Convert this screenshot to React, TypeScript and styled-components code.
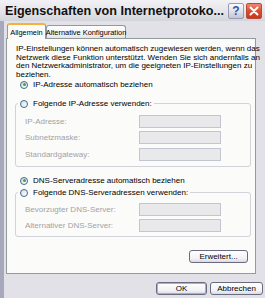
import styled, { createGlobalStyle } from "styled-components";

const GlobalStyle = createGlobalStyle`
  html, body {
    margin: 0;
    padding: 0;
    background: #e2e1e7;
  }
  body {
    width: 265px;
    height: 298px;
    overflow: hidden;
    font-family: "Liberation Sans", Arial, sans-serif;
  }
`;

const Window = styled.div`
  width: 265px;
  height: 298px;
  display: flex;
  flex-direction: column;
  background: #e2e1e7;
`;

const TitleBar = styled.div`
  height: 21px;
  flex: none;
  display: flex;
  align-items: center;
  padding: 0 3px 0 5px;
  background: linear-gradient(#f2f2f6, #e2e2e8 60%, #d4d4dc);
`;

const Title = styled.div`
  flex: 1;
  font-size: 12.6px;
  font-weight: 700;
  color: #111;
  white-space: nowrap;
`;

const CaptionButton = styled.div<{ $close?: boolean }>`
  width: 16px;
  height: 16px;
  margin-left: 2px;
  box-sizing: border-box;
  border-radius: 2px;
  display: flex;
  align-items: center;
  justify-content: center;
  border: 1px solid ${(p) => (p.$close ? "#b84a3a" : "#9a9ab2")};
  background: ${(p) =>
    p.$close
      ? "linear-gradient(#f08a70, #dc4c30 50%, #c8381e)"
      : "linear-gradient(#fafafc, #dcdce6 60%, #c4c4d4)"};
  color: #2d56a8;
  font-size: 12px;
  font-weight: 700;
`;

const Frame = styled.div`
  flex: 1;
  display: flex;
  flex-direction: column;
  border-left: 4px solid #a8a8bc;
  padding: 1px 0 0 2px;
`;

const TabStrip = styled.div`
  height: 16px;
  display: flex;
  align-items: flex-end;
  padding-left: 1px;
`;

const Tab = styled.div<{ $active?: boolean }>`
  position: relative;
  z-index: 1;
  box-sizing: border-box;
  display: flex;
  align-items: center;
  justify-content: center;
  white-space: nowrap;
  font-size: 7.4px;
  color: #000;
  border: 1px solid #919b9c;
  border-bottom: none;
  border-radius: 3px 3px 0 0;
  width: ${(p) => (p.$active ? "39px" : "80px")};
  height: ${(p) => (p.$active ? "16px" : "13px")};
  margin-bottom: ${(p) => (p.$active ? "-1px" : "0")};
  border-top: ${(p) => (p.$active ? "2px solid #f4b23c" : "1px solid #919b9c")};
  background: ${(p) =>
    p.$active ? "#fbfbf9" : "linear-gradient(#ffffff, #f0f0f2 70%, #e4e4e8)"};
`;

const Panel = styled.div`
  height: 236px;
  margin-right: 9px;
  box-sizing: border-box;
  border: 1px solid #919b9c;
  background: #fbfbf9;
  padding: 0 4px 0 8px;
  display: flex;
  flex-direction: column;
`;

const Intro = styled.p`
  margin: 6px 0 0 1px;
  font-size: 8px;
  line-height: 8.7px;
  color: #000;
  white-space: nowrap;
`;

const RadioRow = styled.label<{ $top?: number }>`
  display: flex;
  align-items: center;
  gap: 5px;
  height: 10px;
  margin-top: ${(p) => p.$top ?? 0}px;
  margin-left: 5px;
  font-size: 8px;
  color: #000;
  white-space: nowrap;
`;

const Radio = styled.span<{ $checked?: boolean }>`
  width: 8px;
  height: 8px;
  box-sizing: border-box;
  border-radius: 50%;
  border: 1px solid #3a6a9a;
  background: linear-gradient(135deg, #dcdcd8, #ffffff);
  display: flex;
  align-items: center;
  justify-content: center;
  &::after {
    content: "";
    width: 3px;
    height: 3px;
    border-radius: 50%;
    background: ${(p) => (p.$checked ? "#3aa83a" : "transparent")};
  }
`;

const Group = styled.fieldset<{ $top: number }>`
  margin: ${(p) => p.$top}px 0 0 0;
  padding: 0;
  border: 1px solid #d2d2da;
  border-radius: 3px;
  min-inline-size: 0;
`;

const Legend = styled.legend`
  margin-left: 2px;
  padding: 0 2px;
  height: 10px;
`;

const LegendRow = styled.span`
  display: flex;
  align-items: center;
  gap: 5px;
  height: 10px;
  font-size: 8px;
  color: #000;
  white-space: nowrap;
`;

const Fields = styled.div<{ $pt: number; $pb: number }>`
  display: flex;
  flex-direction: column;
  gap: 3.5px;
  padding: ${(p) => p.$pt}px 0 ${(p) => p.$pb}px 9px;
`;

const FieldRow = styled.div`
  display: flex;
  align-items: center;
  height: 13px;
`;

const FieldLabel = styled.span`
  width: 114px;
  font-size: 8px;
  color: #a2a2a6;
  white-space: nowrap;
`;

const Input = styled.div`
  width: 82px;
  height: 13px;
  box-sizing: border-box;
  border: 1px solid #c2c6d2;
  background: #e9e9ec;
`;

const Button = styled.div<{ $w: number; $default?: boolean }>`
  width: ${(p) => p.$w}px;
  height: 13px;
  box-sizing: border-box;
  display: flex;
  align-items: center;
  justify-content: center;
  font-size: 8px;
  color: #000;
  border: 1px solid #6a6a80;
  border-radius: 3px;
  background: linear-gradient(#ffffff, #f2f2f4 70%, #d8d8e0);
  box-shadow: ${(p) => (p.$default ? "inset 0 0 0 1px #9ab4e0" : "none")};
`;

const AdvancedButton = styled(Button)`
  align-self: flex-end;
  margin-top: 13px;
  margin-right: 3px;
`;

const Footer = styled.div`
  display: flex;
  justify-content: flex-end;
  gap: 3px;
  padding-top: 8px;
  margin-right: 2px;
`;

export default function App() {
  return (
    <>
      <GlobalStyle />
      <Window>
        <TitleBar>
          <Title>Eigenschaften von Internetprotoko...</Title>
          <CaptionButton>?</CaptionButton>
          <CaptionButton $close>
            <svg width="10" height="10" viewBox="0 0 10 10">
              <path d="M1.5 1.5 L8.5 8.5 M8.5 1.5 L1.5 8.5" stroke="#fff" strokeWidth="2" strokeLinecap="round" />
            </svg>
          </CaptionButton>
        </TitleBar>
        <Frame>
          <TabStrip>
            <Tab $active>Allgemein</Tab>
            <Tab>Alternative Konfiguration</Tab>
          </TabStrip>
          <Panel>
            <Intro>
              IP-Einstellungen können automatisch zugewiesen werden, wenn das
              <br />
              Netzwerk diese Funktion unterstützt. Wenden Sie sich andernfalls an
              <br />
              den Netzwerkadministrator, um die geeigneten IP-Einstellungen zu
              <br />
              beziehen.
            </Intro>
            <RadioRow>
              <Radio $checked />
              IP-Adresse automatisch beziehen
            </RadioRow>
            <Group $top={9}>
              <Legend>
                <LegendRow>
                  <Radio />
                  Folgende IP-Adresse verwenden:
                </LegendRow>
              </Legend>
              <Fields $pt={6} $pb={5}>
                <FieldRow>
                  <FieldLabel>IP-Adresse:</FieldLabel>
                  <Input />
                </FieldRow>
                <FieldRow>
                  <FieldLabel>Subnetzmaske:</FieldLabel>
                  <Input />
                </FieldRow>
                <FieldRow>
                  <FieldLabel>Standardgateway:</FieldLabel>
                  <Input />
                </FieldRow>
              </Fields>
            </Group>
            <RadioRow $top={9}>
              <Radio $checked />
              DNS-Serveradresse automatisch beziehen
            </RadioRow>
            <Group $top={2}>
              <Legend>
                <LegendRow>
                  <Radio />
                  Folgende DNS-Serveradressen verwenden:
                </LegendRow>
              </Legend>
              <Fields $pt={5} $pb={4}>
                <FieldRow>
                  <FieldLabel>Bevorzugter DNS-Server:</FieldLabel>
                  <Input />
                </FieldRow>
                <FieldRow>
                  <FieldLabel>Alternativer DNS-Server:</FieldLabel>
                  <Input />
                </FieldRow>
              </Fields>
            </Group>
            <AdvancedButton $w={59}>Erweitert...</AdvancedButton>
          </Panel>
          <Footer>
            <Button $w={51} $default>OK</Button>
            <Button $w={53}>Abbrechen</Button>
          </Footer>
        </Frame>
      </Window>
    </>
  );
}
